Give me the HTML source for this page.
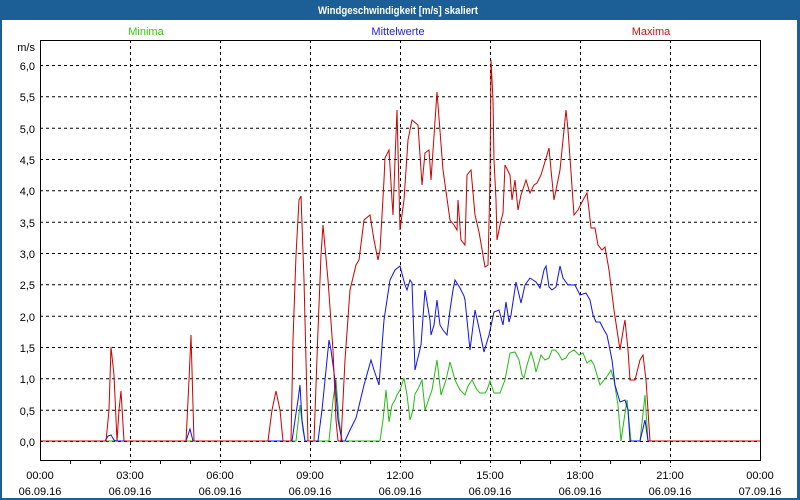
<!DOCTYPE html>
<html><head><meta charset="utf-8"><style>
html,body{margin:0;padding:0;background:#fff}
body{width:800px;height:500px;overflow:hidden;position:relative;font-family:"Liberation Sans","DejaVu Sans",sans-serif}
</style></head><body>
<svg width="800" height="500" xmlns="http://www.w3.org/2000/svg" style="position:absolute;left:0;top:0" font-family="Liberation Sans, DejaVu Sans, sans-serif" font-size="11">
<rect x="0" y="0" width="800" height="500" fill="#1c5f96"/>
<rect x="2" y="20" width="795" height="478" fill="#fff"/>
<text x="398" y="14" fill="#fff" font-weight="bold" text-anchor="middle" font-size="11" textLength="160" lengthAdjust="spacingAndGlyphs">Windgeschwindigkeit [m/s] skaliert</text>
<text x="146" y="35" fill="#33cc00" text-anchor="middle">Minima</text>
<text x="398" y="35" fill="#2222ee" text-anchor="middle">Mittelwerte</text>
<text x="651" y="35" fill="#cc1111" text-anchor="middle">Maxima</text>
<text x="35" y="51" text-anchor="end" fill="#000">m/s</text>
<g stroke="#000" stroke-width="1" stroke-dasharray="3,3" fill="none">
<path d="M40 65.5H760M40 96.8H760M40 128.2H760M40 159.5H760M40 190.8H760M40 222.2H760M40 253.5H760M40 284.8H760M40 316.2H760M40 347.5H760M40 378.8H760M40 410.2H760M40 441.5H760"/>
<path d="M130.5 40V467M220.5 40V467M310.5 40V467M400.5 40V467M490.5 40V467M580.5 40V467M670.5 40V467"/>
</g>
<g fill="#000" text-anchor="end">
<text x="35" y="70">6,0</text><text x="35" y="101">5,5</text><text x="35" y="133">5,0</text><text x="35" y="164">4,5</text><text x="35" y="195">4,0</text><text x="35" y="227">3,5</text><text x="35" y="258">3,0</text><text x="35" y="289">2,5</text><text x="35" y="321">2,0</text><text x="35" y="352">1,5</text><text x="35" y="383">1,0</text><text x="35" y="415">0,5</text><text x="35" y="446">0,0</text>
</g>
<g stroke="#000" stroke-width="1">
<path d="M70.5 460V464M100.5 460V464M160.5 460V464M190.5 460V464M250.5 460V464M280.5 460V464M340.5 460V464M370.5 460V464M430.5 460V464M460.5 460V464M520.5 460V464M550.5 460V464M610.5 460V464M640.5 460V464"/>
</g>
<polyline fill="none" stroke="#22bb11" stroke-width="1" points="40,441 296,441 300,405 303,430 305,441 329,441 333,400 336,380 339,420 342,441 380,441 383,420 386,390 389,422 392,405 395,400 397,395 400,390 404,378 407,395 410,420 413,410 415,394 418,389 422,380 425,410 432,390 437,360 441,395 446,380 450,362 455,380 460,390 465,395 468,386 472,380 477,390 480,393 485,393 487,390 490,381 494,393 500,393 505,380 510,353 515,352 519,360 522,375 524,378 527,365 531,352 534,362 536,372 539,362 541,355 545,360 549,358 552,350 555,350 558,353 562,360 566,358 569,353 574,350 579,355 583,353 587,363 591,360 594,365 597,375 600,385 604,380 608,375 611,370 614,380 618,405 621,441 624,420 627,400 631,441 640,441 645,395 648,441 760,441"/>
<polyline fill="none" stroke="#1111ee" stroke-width="1" points="40,441 105,441 108,436 111,435 114,440 116,441 186,441 190,429 193,441 292,441 295,420 298,400 300,385 302,420 305,441 318,441 322,410 326,370 329,340 331,350 335,380 338,420 342,441 345,441 350,430 356,418 358,410 364,385 371,360 374,370 379,385 384,320 390,280 395,270 400,266 405,285 407,290 410,280 412,283 415,370 421,345 425,290 430,320 431,335 434,325 437,300 440,325 443,330 447,335 450,310 453,290 455,280 460,288 464,296 465,300 467,320 470,350 475,310 479,328 484,352 489,335 494,312 499,310 503,325 506,302 509,322 511,315 516,282 521,303 525,285 530,278 536,282 540,288 544,270 546,266 549,287 552,290 556,287 560,266 563,278 568,285 575,285 580,295 586,293 590,300 593,315 596,322 600,322 604,330 607,335 612,360 615,385 620,402 625,400 628,410 630,441 640,441 645,420 648,441 760,441"/>
<polyline fill="none" stroke="#cc0000" stroke-width="1" points="40,441 106,441 109,410 111,347 114,375 117,441 119,410 121,391 124,441 186,441 189,380 191,335 194,441 268,441 272,410 276,391 280,410 283,441 291,441 293,340 296,255 299,200 301,196 304,280 308,441 314,441 318,330 321,255 323,225 328,280 333,350 336,420 338,441 341,441 345,360 350,290 356,265 359,260 364,220 370,215 374,240 378,260 380,250 384,180 385,158 389,150 392,200 393,215 395,160 397,110 400,230 404,200 408,140 412,120 418,125 422,185 425,153 429,150 431,180 437,92 443,170 450,220 454,225 457,230 458,200 461,240 465,245 467,175 471,170 475,215 479,232 483,255 485,267 488,265 490,180 491,60 493,100 494,160 496,200 497,240 500,225 503,213 505,165 510,175 512,200 515,180 518,210 521,195 526,180 530,193 534,185 537,183 541,175 544,165 549,148 551,170 554,200 556,190 560,170 566,110 568,130 570,158 574,215 578,210 583,200 587,193 589,210 591,228 595,228 598,245 602,250 605,247 609,270 614,310 620,350 624,325 625,320 628,350 630,380 635,380 640,360 643,355 646,380 650,441 760,441"/>
<rect x="40.5" y="40.5" width="720" height="420" fill="none" stroke="#000" stroke-width="1"/>
<g fill="#000" text-anchor="middle">
<text x="40" y="479">00:00</text><text x="130" y="479">03:00</text><text x="220" y="479">06:00</text><text x="310" y="479">09:00</text><text x="400" y="479">12:00</text><text x="490" y="479">15:00</text><text x="580" y="479">18:00</text><text x="670" y="479">21:00</text><text x="760" y="479">00:00</text>
<text x="40" y="495">06.09.16</text><text x="130" y="495">06.09.16</text><text x="220" y="495">06.09.16</text><text x="310" y="495">06.09.16</text><text x="400" y="495">06.09.16</text><text x="490" y="495">06.09.16</text><text x="580" y="495">06.09.16</text><text x="670" y="495">06.09.16</text><text x="760" y="495">07.09.16</text>
</g>
</svg>
</body></html>
